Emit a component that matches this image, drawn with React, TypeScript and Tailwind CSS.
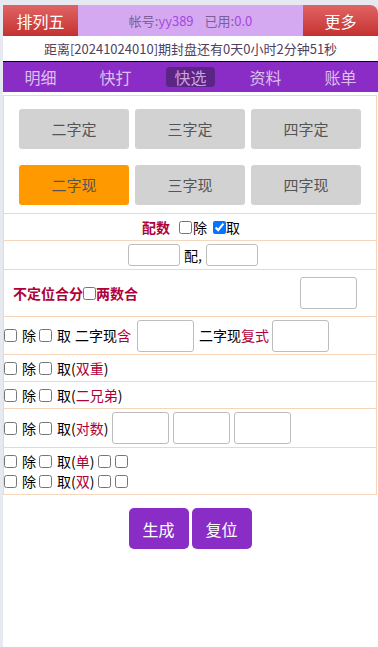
import React from "react";

const font = { fontFamily: '"Noto Sans CJK SC", "Noto Sans", sans-serif' };

function Cb({ checked = false, cls = "" }: { checked?: boolean; cls?: string }) {
  return (
    <input
      type="checkbox"
      defaultChecked={checked}
      className={`w-[13px] h-[13px] shrink-0 ${cls}`}
    />
  );
}

function Inp({ w, h }: { w: string; h: string }) {
  return <input type="text" className={`${w} ${h} shrink-0 border border-[#bdbdbd] rounded-[3px] bg-white`} />;
}

const Red = ({ children }: { children: React.ReactNode }) => (
  <span className="text-[#b0003a]">{children}</span>
);

function ChuQu() {
  return (
    <>
      <Cb cls="mr-[5px]" />
      <span>除</span>
      <Cb cls="ml-[3px] mr-[5px]" />
      <span>取</span>
    </>
  );
}

export default function App() {
  const tabs = ["明细", "快打", "快选", "资料", "账单"];
  return (
    <div className="min-h-[647px] bg-[#e6e9f0] pt-[5px] pl-[3px]" style={font}>
      <div className="bg-white rounded-tr-[8px] min-h-[642px] overflow-hidden">
        {/* header */}
        <div className="flex h-[31px] text-[16px]">
          <div className="w-[75px] flex items-center justify-center text-white bg-gradient-to-b from-[#e06464] to-[#c4302f]">
            排列五
          </div>
          <div className="flex-1 flex items-center justify-center bg-[#d4a9f2] text-[13px] text-[#7d5f98]">
            帐号:<span className="text-[#a646e0]">yy389</span>
            <span className="ml-[11px]">已用:</span>
            <span className="text-[#a646e0]">0.0</span>
          </div>
          <div className="w-[75px] flex items-center justify-center text-white bg-gradient-to-b from-[#e06464] to-[#c4302f]">
            更多
          </div>
        </div>
        {/* countdown */}
        <div className="h-[26px] flex items-center justify-center text-[13px] text-[#4f4060] border-b border-black">
          距离[20241024010]期封盘还有0天0小时2分钟51秒
        </div>
        {/* nav */}
        <div className="h-[30px] bg-[#8a2dc7] grid grid-cols-5 items-center text-[16px] text-[#dcc0ec]">
          {tabs.map((t) => (
            <div key={t} className="flex justify-center">
              {t === "快选" ? (
                <span className="bg-[#5b2585] text-[#c9a3e3] rounded-[4px] px-[8px] h-[20px] leading-[20px]">{t}</span>
              ) : (
                <span>{t}</span>
              )}
            </div>
          ))}
        </div>
        {/* content */}
        <div className="mt-[3px] mr-[1px] border border-[#f5d6ba] text-[14px] text-black">
          <div className="pt-[13px] pb-[8px] pl-[15px] pr-[15px] border-b border-[#f5d6ba]">
            <div className="grid grid-cols-3 gap-x-[6px] gap-y-[16px] text-[15px] text-[#555]">
              {["二字定", "三字定", "四字定", "二字现", "三字现", "四字现"].map((t) => (
                <div
                  key={t}
                  className={`h-[40px] rounded-[3px] flex items-center justify-center ${
                    t === "二字现" ? "bg-[#ff9900]" : "bg-[#d2d2d2]"
                  }`}
                >
                  {t}
                </div>
              ))}
            </div>
          </div>
          <div className="h-[27px] flex items-center justify-center border-b border-[#f5d6ba] pl-[2px]">
            <span className="font-bold text-[#b0003a]">配数</span>
            <Cb cls="ml-[9px] mr-[1px]" />
            <span>除</span>
            <Cb checked cls="ml-[6px]" />
            <span>取</span>
          </div>
          <div className="h-[29px] flex items-center justify-center border-b border-[#f5d6ba] pl-[6px]">
            <Inp w="w-[52px]" h="h-[22px]" />
            <span className="mx-[4px]">配,</span>
            <Inp w="w-[52px]" h="h-[22px]" />
          </div>
          <div className="h-[47px] flex items-center border-b border-[#f5d6ba] pr-[19px]">
            <span className="ml-[9px] font-bold text-[#b0003a]">不定位合分</span>
            <Cb />
            <span className="font-bold text-[#b0003a]">两数合</span>
            <div className="flex-1" />
            <Inp w="w-[57px]" h="h-[32px]" />
          </div>
          <div className="h-[38px] flex items-center border-b border-[#f5d6ba]">
            <ChuQu />
            <span className="ml-[4px]">二字现</span>
            <Red>含</Red>
            <span className="w-[6px]" />
            <Inp w="w-[57px]" h="h-[32px]" />
            <span className="ml-[5px]">二字现</span>
            <Red>复式</Red>
            <span className="w-[3px]" />
            <Inp w="w-[57px]" h="h-[32px]" />
          </div>
          <div className="h-[27px] flex items-center border-b border-[#f5d6ba]">
            <ChuQu />(<Red>双重</Red>)
          </div>
          <div className="h-[27px] flex items-center border-b border-[#f5d6ba]">
            <ChuQu />(<Red>二兄弟</Red>)
          </div>
          <div className="h-[39px] flex items-center border-b border-[#f5d6ba]">
            <ChuQu />(<Red>对数</Red>)
            <span className="w-[4px]" />
            <Inp w="w-[57px]" h="h-[32px]" />
            <span className="w-[4px]" />
            <Inp w="w-[57px]" h="h-[32px]" />
            <span className="w-[4px]" />
            <Inp w="w-[57px]" h="h-[32px]" />
          </div>
          <div className="h-[46px] flex flex-col justify-center">
            <div className="flex items-center h-[20px]">
              <ChuQu />(<Red>单</Red>)
              <Cb cls="ml-[4px]" />
              <Cb cls="ml-[4px]" />
            </div>
            <div className="flex items-center h-[20px]">
              <ChuQu />(<Red>双</Red>)
              <Cb cls="ml-[4px]" />
              <Cb cls="ml-[4px]" />
            </div>
          </div>
        </div>
        <div className="flex justify-center gap-[3px] mt-[13px] pr-[1px]">
          <button className="w-[60px] h-[41px] rounded-[5px] bg-[#8a2dc7] text-white text-[16px]">生成</button>
          <button className="w-[60px] h-[41px] rounded-[5px] bg-[#8a2dc7] text-white text-[16px]">复位</button>
        </div>
      </div>
    </div>
  );
}
